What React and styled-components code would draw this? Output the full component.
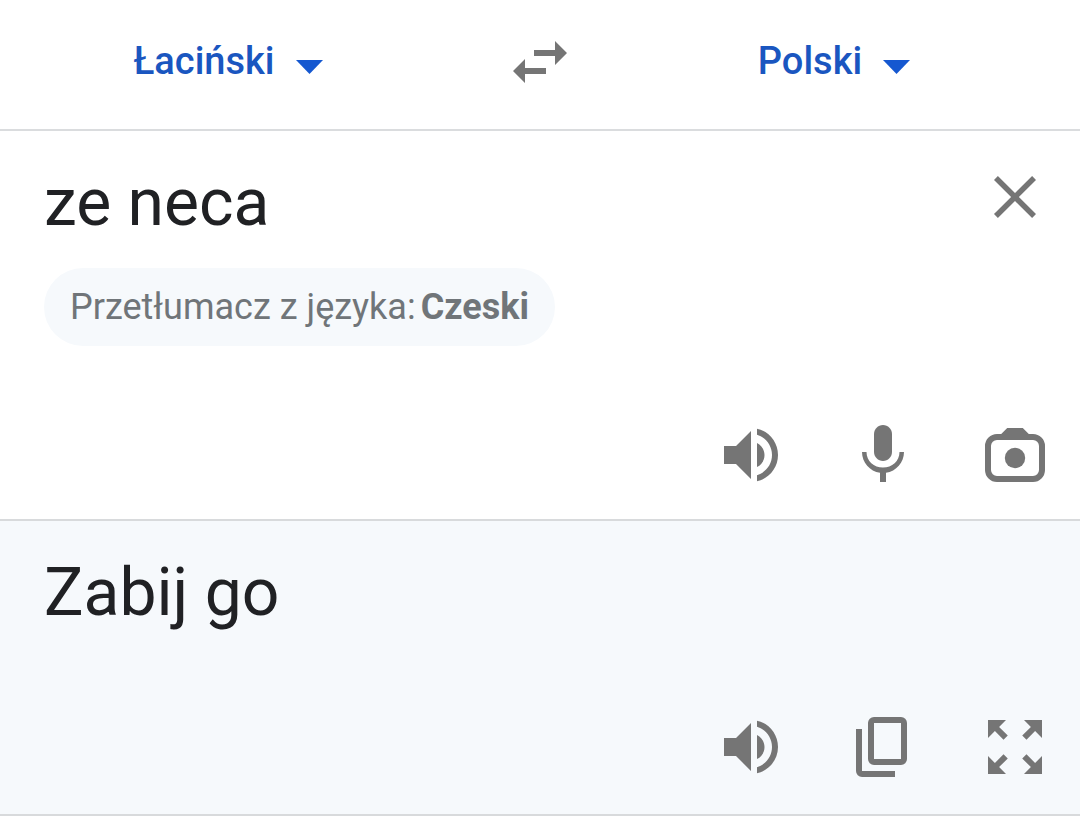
import React, {useState} from "react";
import styled, {createGlobalStyle} from "styled-components";

const GlobalStyle = createGlobalStyle`
  * {
    box-sizing: border-box;
  }

  body {
    margin: 0;
    background-color: #fff;
    font-family: Roboto, "Liberation Sans", sans-serif;
  }
`;

const Header = styled.header`
  display: grid;
  grid-template-columns: 1fr 168px 1fr;
  align-items: center;
  justify-items: center;
  padding: 26px 0 31px;
  border-bottom: 2px solid #dadcde;
`;

const LanguageWrapper = styled.div`
  display: flex;
  align-items: center;
  padding-right: ${({$inset}) => $inset || 0}px;
`;

const LanguageSelect = styled.select`
  appearance: none;
  field-sizing: content;
  border: 0;
  margin: 0;
  padding: 0 48px 2px 0;
  background: transparent;
  color: #1a56c0;
  font-family: inherit;
  font-size: 38px;
  font-weight: 500;
  line-height: 46px;
  cursor: pointer;
`;

const Caret = styled.svg`
  width: 27px;
  height: 14px;
  margin: 10px 0 0 -27px;
  fill: #1558d0;
  pointer-events: none;
`;

const IconButton = styled.button`
  display: flex;
  flex: none;
  width: 72px;
  height: 72px;
  border: 0;
  padding: 0;
  background: transparent;
  color: #757575;
  cursor: pointer;

  svg {
    width: 100%;
    height: 100%;
    fill: currentColor;
  }
`;

const Panel = styled.section`
  padding: 30px 29px ${({$result}) => $result ? 31 : 28}px 44px;
  background-color: ${({$result}) => $result ? "#f6f9fc" : "#fff"};
  border-bottom: 2px solid #d8dadc;
`;

const TextRow = styled.div`
  display: flex;
  align-items: flex-start;
`;

const SourceText = styled.textarea`
  flex: 1;
  min-width: 0;
  height: 84px;
  border: 0;
  padding: 0;
  outline: none;
  resize: none;
  overflow: hidden;
  background: transparent;
  color: #202124;
  font-family: inherit;
  font-size: 66px;
  line-height: 84px;
`;

const ResultText = styled.p`
  margin: 0;
  color: #202124;
  font-size: 66px;
  line-height: 84px;
`;

const Suggestion = styled.button`
  display: flex;
  align-items: center;
  gap: 5px;
  height: 78px;
  margin-top: 23px;
  border: 0;
  border-radius: 39px;
  padding: 0 26px;
  background-color: #f6f9fc;
  color: #707579;
  font-family: inherit;
  font-size: 36px;
  line-height: 42px;
  cursor: pointer;
`;

const Tools = styled.div`
  display: flex;
  justify-content: flex-end;
  gap: 60px;
  margin-top: ${({$result}) => $result ? 76 : 73}px;
`;

const Icon = ({children}) => (
    <svg viewBox="0 0 24 24" aria-hidden="true">{children}</svg>
)

const SwapIcon = () => (
    <Icon>
        <path d="M7 11L3 15l4 4v-3h7v-2H7zM21 9l-4-4v3h-7v2h7v3z"/>
    </Icon>
)

const CloseIcon = () => (
    <Icon>
        <path d="M19 6.3L17.7 5 12 10.7 6.3 5 5 6.3 10.7 12 5 17.7 6.3 19 12 13.3 17.7 19 19 17.7 13.3 12z"/>
    </Icon>
)

const SpeakerIcon = () => (
    <Icon>
        <path d="M3 9v6h4l5 5V4L7 9zM14 7.97v8.06c1.48-.74 2.5-2.26 2.5-4.03s-1.02-3.29-2.5-4.03z"/>
        <path d="M14 3.23v2.06c2.89.86 5 3.54 5 6.71s-2.11 5.85-5 6.71v2.06c4.01-.91 7-4.49 7-8.77s-2.99-7.86-7-8.77z"/>
    </Icon>
)

const MicIcon = () => (
    <Icon>
        <path d="M12 14c1.66 0 3-1.34 3-3V5c0-1.66-1.34-3-3-3S9 3.34 9 5v6c0 1.66 1.34 3 3 3z"/>
        <path d="M17.5 11c0 3.03-2.47 5.2-5.5 5.2S6.5 14.03 6.5 11H5c0 3.53 2.61 6.43 6 6.92V21h2v-3.08c3.39-.49 6-3.39 6-6.92z"/>
    </Icon>
)

const CameraIcon = () => (
    <Icon>
        <path fillRule="evenodd" d="M9.4 3h5.2l2 2H18a4 4 0 0 1 4 4v8a4 4 0 0 1-4 4H6a4 4 0 0 1-4-4V9a4 4 0 0 1 4-4h1.4zM6 7a2 2 0 0 0-2 2v8a2 2 0 0 0 2 2h12a2 2 0 0 0 2-2V9a2 2 0 0 0-2-2z"/>
        <circle cx="12" cy="13" r="3.4"/>
    </Icon>
)

const CopyIcon = () => (
    <Icon>
        <path fillRule="evenodd" d="M18 2H9a2 2 0 0 0-2 2v12a2 2 0 0 0 2 2h9a2 2 0 0 0 2-2V4a2 2 0 0 0-2-2zm0 14H9V4h9z"/>
        <path d="M3 6v14a2 2 0 0 0 2 2h11v-2H5V6z"/>
    </Icon>
)

const FullscreenIcon = () => (
    <Icon>
        <path d="M15 3l2.3 2.3-2.89 2.87 1.42 1.42L18.7 6.7 21 9V3z"/>
        <path d="M3 9l2.3-2.3 2.87 2.89 1.42-1.42L6.7 5.3 9 3H3z"/>
        <path d="M9 21l-2.3-2.3 2.89-2.87-1.42-1.42L5.3 17.3 3 15v6z"/>
        <path d="M21 15l-2.3 2.3-2.87-2.89-1.42 1.42 2.89 2.87L15 21h6z"/>
    </Icon>
)

const languages = ["Łaciński", "Polski", "Czeski"]

const Language = ({label, value, onChange, inset}) => (
    <LanguageWrapper $inset={inset}>
        <LanguageSelect aria-label={label} value={value} onChange={(e) => onChange(e.target.value)}>
            {
                languages.map((language) => (
                    <option key={language} value={language}>{language}</option>
                ))
            }
        </LanguageSelect>
        <Caret viewBox="0 0 27 14" aria-hidden="true">
            <path d="M0 0h27L13.5 14z"/>
        </Caret>
    </LanguageWrapper>
)

const App = () => {

    const [from, setFrom] = useState("Łaciński")
    const [to, setTo] = useState("Polski")
    const [text, setText] = useState("ze neca")

    const swap = () => {
        setFrom(to)
        setTo(from)
    }

    return(
        <>
        <GlobalStyle/>
        <Header>
            <Language label="Język źródłowy" value={from} onChange={setFrom}/>
            <IconButton aria-label="Zamień języki" onClick={swap}><SwapIcon/></IconButton>
            <Language label="Język docelowy" value={to} onChange={setTo} inset={36}/>
        </Header>
        <main>
            <Panel>
                <TextRow>
                    <SourceText
                        aria-label="Tekst źródłowy"
                        rows={1}
                        spellCheck={false}
                        value={text}
                        onChange={(e) => setText(e.target.value)}
                    />
                    <IconButton aria-label="Wyczyść" onClick={() => setText("")}><CloseIcon/></IconButton>
                </TextRow>
                <Suggestion onClick={() => setFrom("Czeski")}>
                    Przetłumacz z języka: <b>Czeski</b>
                </Suggestion>
                <Tools>
                    <IconButton aria-label="Odsłuchaj tekst"><SpeakerIcon/></IconButton>
                    <IconButton aria-label="Mów"><MicIcon/></IconButton>
                    <IconButton aria-label="Aparat"><CameraIcon/></IconButton>
                </Tools>
            </Panel>
            <Panel $result>
                <ResultText>Zabij go</ResultText>
                <Tools $result>
                    <IconButton aria-label="Odsłuchaj tłumaczenie"><SpeakerIcon/></IconButton>
                    <IconButton aria-label="Kopiuj"><CopyIcon/></IconButton>
                    <IconButton aria-label="Pełny ekran"><FullscreenIcon/></IconButton>
                </Tools>
            </Panel>
        </main>
        </>
    )
}

export default App
